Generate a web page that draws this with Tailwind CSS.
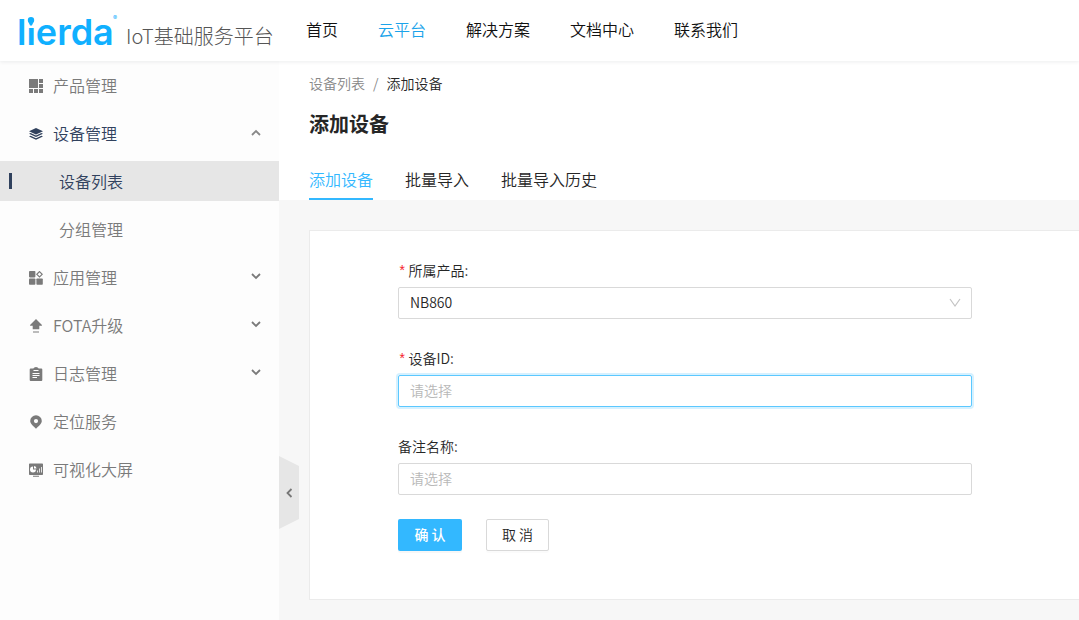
<!DOCTYPE html>
<html lang="zh-CN">
<head>
<meta charset="utf-8">
<meta name="viewport" content="width=device-width, initial-scale=1">
<title>添加设备</title>
<script src="https://cdn.jsdelivr.net/npm/@tailwindcss/browser@4"></script>
</head>
<body class="flex h-screen flex-col overflow-hidden bg-white font-['Noto_Sans_CJK_SC',sans-serif] text-sm font-[350] text-[#262626]">
<header class="relative z-10 flex h-[61px] shrink-0 items-center bg-white shadow-[0_1px_4px_rgba(0,21,41,0.08)]">
  <a href="#" class="ml-[17px] flex h-full w-[289px] shrink-0 items-center">
    <span class="relative mt-0.5 w-[109px] font-['Inter',sans-serif] text-[36px] leading-10 font-semibold text-[#10b0ff]">lierda
      <svg class="absolute top-[4px] left-[10px]" width="8" height="12" viewBox="0 0 8 12"><path fill="#fff" d="M0 0h8v12H0z"/><path fill="#10b0ff" d="M4 1a3.200 3.200 0 0 1 3.200 3.200C7.200 6.300 5.500 7.300 5 9.500H3C2.500 7.300.8 6.300.8 4.200A3.200 3.200 0 0 1 4 1z"/></svg>
      <span class="absolute top-0 left-[96px] text-[6px] leading-3 font-normal">®</span>
    </span>
    <span class="mt-2.5 text-xl leading-7 font-light whitespace-nowrap text-[#555]">IoT基础服务平台</span>
  </a>
  <nav class="flex gap-10 pb-1 text-base whitespace-nowrap text-[#111]">
    <a href="#">首页</a>
    <a href="#" class="text-[#1ba3ea]">云平台</a>
    <a href="#">解决方案</a>
    <a href="#">文档中心</a>
    <a href="#">联系我们</a>
  </nav>
</header>
<div class="flex min-h-0 flex-1">
  <aside class="w-[279px] shrink-0 bg-[#fdfdfd] pt-1">
    <nav class="flex flex-col gap-2 text-base text-[#7a7a7a]">
      <a href="#" class="flex h-10 items-center gap-[10px] pr-[18px] pl-[29px]">
        <svg class="mt-0.5" width="14" height="14" viewBox="0 0 14 14" fill="currentColor"><path d="M0 0h9v9H0zM10 0h4v4h-4zM10 5h4v4h-4zM0 10h4v4H0zM5 10h4v4H5zM10 10h4v4h-4z"/></svg>
        产品管理
      </a>
      <button type="button" aria-expanded="true" class="flex h-10 items-center gap-[10px] pr-[18px] pl-[29px] text-[#30415d]">
        <svg class="mt-0.5" width="14" height="14" viewBox="0 0 14 14" fill="currentColor"><path d="M7 1l7 3.200L7 7.500 0 4.200z"/><path d="M0 6.700l1.600-.7L7 8.600 12.400 6l1.600.7L7 10zM0 9.400l1.600-.7L7 11.300l5.400-2.600 1.600.7-7 3.300z"/></svg>
        设备管理
        <svg class="ml-auto text-[#888]" width="10" height="10" viewBox="0 0 10 10" fill="none" stroke="currentColor" stroke-width="1.800"><path d="M1 7l4-4 4 4"/></svg>
      </button>
      <a href="#" class="flex h-10 items-center bg-[#e6e6e6] pl-[9px] text-[#30415d]">
        <span class="mr-[47px] h-4 w-[3px] bg-[#30415d]"></span>设备列表
      </a>
      <a href="#" class="flex h-10 items-center pl-[59px]">分组管理</a>
      <button type="button" aria-expanded="false" class="flex h-10 items-center gap-[10px] pr-[18px] pl-[29px]">
        <svg class="mt-0.5" width="14" height="14" viewBox="0 0 14 14" fill="currentColor"><rect y="0" width="6.400" height="6.400" rx=".8"/><rect y="7.400" width="6.400" height="6.400" rx=".8"/><rect x="7.400" y="7.400" width="6.400" height="6.400" rx=".8"/><path d="M10.500.6l2.700 2.700L10.500 6 7.800 3.300z" fill="none" stroke="currentColor" stroke-width="1.200"/></svg>
        应用管理
        <svg class="ml-auto" width="10" height="10" viewBox="0 0 10 10" fill="none" stroke="currentColor" stroke-width="1.800"><path d="M1 2l4 4 4-4"/></svg>
      </button>
      <button type="button" aria-expanded="false" class="flex h-10 items-center gap-[10px] pr-[18px] pl-[29px]">
        <svg class="mt-0.5" width="14" height="14" viewBox="0 0 14 14" fill="currentColor"><path d="M7 0L13 6q.3.800-.5.800H10.300V10.300H3.700V6.800H1.500q-.8 0-.5-.8z"/><path d="M4 12.500h6v1H4z"/></svg>
        FOTA升级
        <svg class="ml-auto" width="10" height="10" viewBox="0 0 10 10" fill="none" stroke="currentColor" stroke-width="1.800"><path d="M1 2l4 4 4-4"/></svg>
      </button>
      <button type="button" aria-expanded="false" class="flex h-10 items-center gap-[10px] pr-[18px] pl-[29px]">
        <svg class="mt-0.5" width="14" height="14" viewBox="0 0 14 14"><path fill="currentColor" d="M1.700 1.500h2.600Q5 0 7 0t2.700 1.500h2.600q1 0 1 1V13q0 1-1 1H1.700q-1 0-1-1V2.500q0-1 1-1z"/><path stroke="#fff" d="M4.500 3.500h5M3.500 6.500h7M3.500 8.500h7M3.500 10.500h4.500"/></svg>
        日志管理
        <svg class="ml-auto" width="10" height="10" viewBox="0 0 10 10" fill="none" stroke="currentColor" stroke-width="1.800"><path d="M1 2l4 4 4-4"/></svg>
      </button>
      <a href="#" class="flex h-10 items-center gap-[10px] pr-[18px] pl-[29px]">
        <svg class="mt-0.5" width="14" height="14" viewBox="0 0 14 14"><path fill="currentColor" fill-rule="evenodd" d="M7 .2a5.800 5.800 0 0 1 5.800 5.800C12.800 9 9.500 11 7 13.800 4.500 11 1.200 9 1.200 6A5.800 5.800 0 0 1 7 .2zM7 4a2.100 2.100 0 1 0 0 4.200A2.100 2.100 0 0 0 7 4z"/></svg>
        定位服务
      </a>
      <a href="#" class="flex h-10 items-center gap-[10px] pr-[18px] pl-[29px]">
        <svg class="mt-0.5" width="14" height="14" viewBox="0 0 14 14"><path fill="currentColor" d="M.8.500h12.400q.8 0 .8.800v9.900q0 .8-.8.800H.8q-.8 0-.8-.8V1.300Q0 .5.800.5zM4 12.800h6v1H4z"/><path fill="#fff" d="M4 3.500v3h3a3 3 0 1 1-3-3zM5 3a2.600 2.600 0 0 1 2.500 2.500H5z"/><path stroke="#fff" stroke-width=".8" d="M8.500 9.500v-2M10.500 9.500v-4M12.500 9.500V4"/></svg>
        可视化大屏
      </a>
    </nav>
  </aside>
  <main class="relative min-w-0 flex-1 overflow-hidden bg-[#f7f7f7]">
    <button type="button" aria-label="收起菜单" class="absolute top-[395px] left-0 flex h-[73px] w-5 items-center justify-center bg-[#e6e6e6] text-[#777] [clip-path:polygon(0_0,100%_10px,100%_63px,0_100%)]">
      <svg width="10" height="10" viewBox="0 0 10 10" fill="none" stroke="currentColor" stroke-width="1.800"><path d="M7.500 1l-4 4 4 4"/></svg>
    </button>
    <section class="bg-white px-[30px] pt-[11px]">
      <nav aria-label="面包屑" class="flex gap-2 leading-[22px]">
        <a href="#" class="text-[#888]">设备列表</a><span class="text-[#888]">/</span><span>添加设备</span>
      </nav>
      <h1 class="mt-4 text-xl leading-7 font-bold">添加设备</h1>
      <div role="tablist" class="mt-6 flex gap-8 text-base leading-6">
        <button type="button" role="tab" aria-selected="true" class="h-[38px] border-b-2 border-[#33b8ff] pb-0.5 text-[#33b8ff]">添加设备</button>
        <button type="button" role="tab" aria-selected="false" class="h-[38px] border-b-2 border-transparent pb-0.5">批量导入</button>
        <button type="button" role="tab" aria-selected="false" class="h-[38px] border-b-2 border-transparent pb-0.5">批量导入历史</button>
      </div>
    </section>
    <section class="mt-[30px] ml-[30px] border-y border-l border-[#ebebeb] bg-white pt-[30px] pr-[107px] pb-12 pl-[88px]">
      <form>
        <div class="mb-[30px]">
          <label for="product" class="flex h-[22px] leading-[18px]"><span class="mr-0.5 pt-0.5 font-['Liberation_Mono',monospace] text-[#f5222d]">*</span>所属产品:</label>
          <div class="relative mt-1">
            <select id="product" class="h-8 w-full appearance-none rounded-xs border border-[#d9d9d9] bg-white px-[11px] pb-0.5"><option>NB860</option></select>
            <svg class="pointer-events-none absolute top-[11px] right-[11px]" width="12" height="10" viewBox="0 0 12 10" fill="none" stroke="#c4c4c4" stroke-width="1.200"><path d="M1 1l5 7 5-7"/></svg>
          </div>
        </div>
        <div class="mb-[30px]">
          <label for="device" class="flex h-[22px] leading-[18px]"><span class="mr-0.5 pt-0.5 font-['Liberation_Mono',monospace] text-[#f5222d]">*</span>设备ID:</label>
          <input id="device" type="text" placeholder="请选择" class="mt-1 block h-8 w-full rounded-xs border border-[#5cc8ff] px-[11px] pb-0.5 shadow-[0_0_0_2px_rgba(51,184,255,0.2)] placeholder:text-[#b8b8b8]">
        </div>
        <div class="mb-6">
          <label for="remark" class="flex h-[22px] leading-[18px]">备注名称:</label>
          <input id="remark" type="text" placeholder="请选择" class="mt-1 block h-8 w-full rounded-xs border border-[#d9d9d9] px-[11px] pb-0.5 placeholder:text-[#b8b8b8]">
        </div>
        <div class="flex gap-6">
          <button type="submit" class="h-8 w-16 rounded-xs bg-[#33b8ff] pb-0.5 font-medium text-white shadow-[0_2px_0_rgba(0,0,0,0.03)]">确 认</button>
          <button type="button" class="h-8 w-[63px] rounded-xs border border-[#d9d9d9] bg-white pb-0.5 shadow-[0_2px_0_rgba(0,0,0,0.015)]">取 消</button>
        </div>
      </form>
    </section>
  </main>
</div>
</body>
</html>
